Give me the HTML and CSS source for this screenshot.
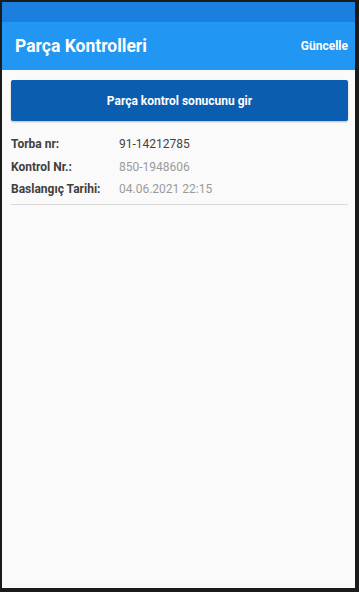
FILE: index.html
```html
<!DOCTYPE html>
<html lang="tr">
<head>
<meta charset="utf-8">
<title>Parça Kontrolleri</title>
<link rel="stylesheet" href="styles.css">
</head>
<body>
<div class="frame">
  <div class="screen">
    <div class="statusbar"></div>
    <header class="appbar">
      <h1 class="title">Parça Kontrolleri</h1>
      <span class="action">Güncelle</span>
    </header>
    <main class="content">
      <button class="primary">Parça kontrol sonucunu gir</button>
      <dl class="details">
        <div class="row"><dt>Torba nr:</dt><dd class="dark">91-14212785</dd></div>
        <div class="row"><dt>Kontrol Nr.:</dt><dd>850-1948606</dd></div>
        <div class="row"><dt>Baslangıç Tarihi:</dt><dd>04.06.2021 22:15</dd></div>
      </dl>
    </main>
  </div>
</div>
</body>
</html>
```
FILE: styles.css
```css
* { box-sizing: border-box; }
html, body { margin: 0; padding: 0; height: 100%; }
body {
  background: #1b1b1b;
  font-family: Roboto, "Noto Sans", sans-serif;
}
.frame {
  height: 592px;
  width: 359px;
  padding: 2px 4px 4px 2px;
}
.screen {
  height: 100%;
  background: #fafafa;
  display: flex;
  flex-direction: column;
  overflow: hidden;
}
.statusbar {
  height: 20px;
  background: #1b7fdf;
  flex: none;
}
.appbar {
  height: 48px;
  flex: none;
  background: #2196f3;
  display: flex;
  align-items: center;
  justify-content: space-between;
  padding: 0 7px 0 13px;
  color: #fff;
}
.title {
  margin: 0;
  font-size: 17.5px;
  font-weight: 700;
}
.action {
  font-size: 12px;
  font-weight: 700;
}
.content {
  padding: 10px 7px 0 9px;
}
.primary {
  display: block;
  width: 100%;
  height: 41px;
  border: none;
  border-radius: 2px;
  background: #0b5db0;
  color: #fff;
  font-family: inherit;
  font-size: 12px;
  font-weight: 700;
  box-shadow: 0 1px 2px rgba(0,0,0,0.25);
}
.details {
  margin: 12px 0 0;
  padding-bottom: 3px;
  border-bottom: 1px solid #dadada;
}
.row {
  display: flex;
  height: 22.5px;
  align-items: center;
  font-size: 12px;
}
.row dt {
  width: 108px;
  font-weight: 700;
  color: #404040;
}
.row dd {
  margin: 0;
  color: #9a9a9a;
}
.row dd.dark { color: #444; }
```
